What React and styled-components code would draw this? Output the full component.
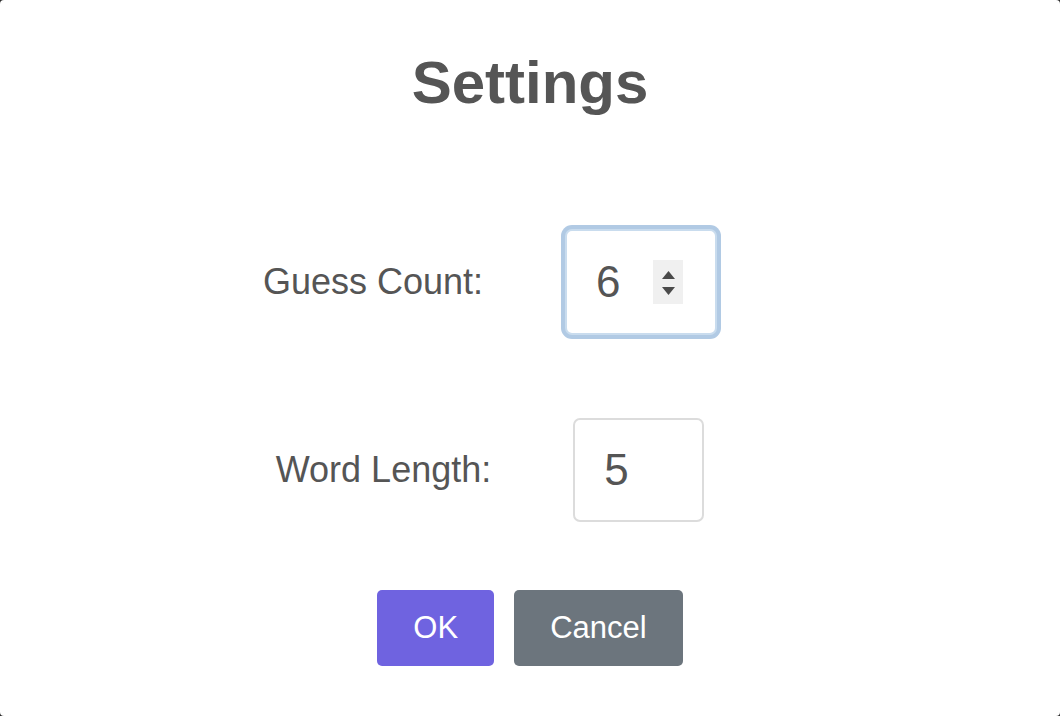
import React from "react";
import styled, { createGlobalStyle } from "styled-components";

const Global = createGlobalStyle`
  html, body { margin: 0; padding: 0; background: #2b2b2b; }
  body { font-family: "Liberation Sans", Arial, Helvetica, sans-serif; }
  * { box-sizing: border-box; }
`;

const Modal = styled.div`
  width: 1060px;
  height: 716px;
  background: #fff;
  border-radius: 4px;
  padding-top: 50px;
  display: flex;
  flex-direction: column;
  align-items: center;
  color: #555;
`;

const Title = styled.h1`
  margin: 0;
  font-size: 60px;
  line-height: 66px;
  font-weight: 700;
  color: #555;
`;

const Form = styled.form`
  margin-top: 113px;
  padding-right: 80px;
  display: flex;
  flex-direction: column;
  align-items: center;
`;

const Row = styled.div`
  display: flex;
  align-items: center;
  gap: 82px;
  margin-bottom: ${(p) => p.$mb || 0}px;
`;

const Label = styled.label`
  font-size: 36px;
  color: #555;
`;

const Field = styled.div`
  width: ${(p) => p.$w}px;
  height: ${(p) => p.$h}px;
  border-radius: 7px;
  background: #fff;
  display: flex;
  align-items: center;
  justify-content: space-between;
  padding: 0 32px 0 29px;
  border: 2px solid ${(p) => (p.$focused ? "#c9dcee" : "#dcdcdc")};
  box-shadow: ${(p) => (p.$focused ? "0 0 0 4px #b1cae4" : "none")};
`;

const Value = styled.input`
  border: none;
  outline: none;
  background: transparent;
  font-family: inherit;
  font-size: 44px;
  color: #555;
  width: 44px;
  padding: 0;
`;

const Spinner = styled.div`
  width: 30px;
  height: 44px;
  background: #f0f0f0;
  display: flex;
  flex-direction: column;
  align-items: center;
  justify-content: space-between;
  padding: 11px 0 9px;
`;

const Buttons = styled.div`
  margin-top: 68px;
  display: flex;
  gap: 20px;
`;

const Button = styled.button`
  height: 76px;
  padding: 0 ${(p) => p.$px}px;
  border: none;
  border-radius: 5px;
  background: ${(p) => p.$bg};
  color: #fff;
  font-family: inherit;
  font-size: 31px;
  cursor: pointer;
`;

const Arrow = ({ up }) => (
  <svg width="13" height="8" viewBox="0 0 13 8">
    <polygon points={up ? "6.5,0 13,8 0,8" : "0,0 13,0 6.5,8"} fill="#4a4a4a" />
  </svg>
);

export default function App() {
  return (
    <>
      <Global />
      <Modal>
        <Title>Settings</Title>
        <Form onSubmit={(e) => e.preventDefault()}>
          <Row $mb={83}>
            <Label>Guess Count:</Label>
            <Field $w={152} $h={106} $focused>
              <Value defaultValue="6" />
              <Spinner>
                <Arrow up />
                <Arrow />
              </Spinner>
            </Field>
          </Row>
          <Row>
            <Label>Word Length:</Label>
            <Field $w={131} $h={104}>
              <Value defaultValue="5" />
            </Field>
          </Row>
        </Form>
        <Buttons>
          <Button $bg="#6f63e0" $px={36}>OK</Button>
          <Button $bg="#6c757d" $px={36}>Cancel</Button>
        </Buttons>
      </Modal>
    </>
  );
}
